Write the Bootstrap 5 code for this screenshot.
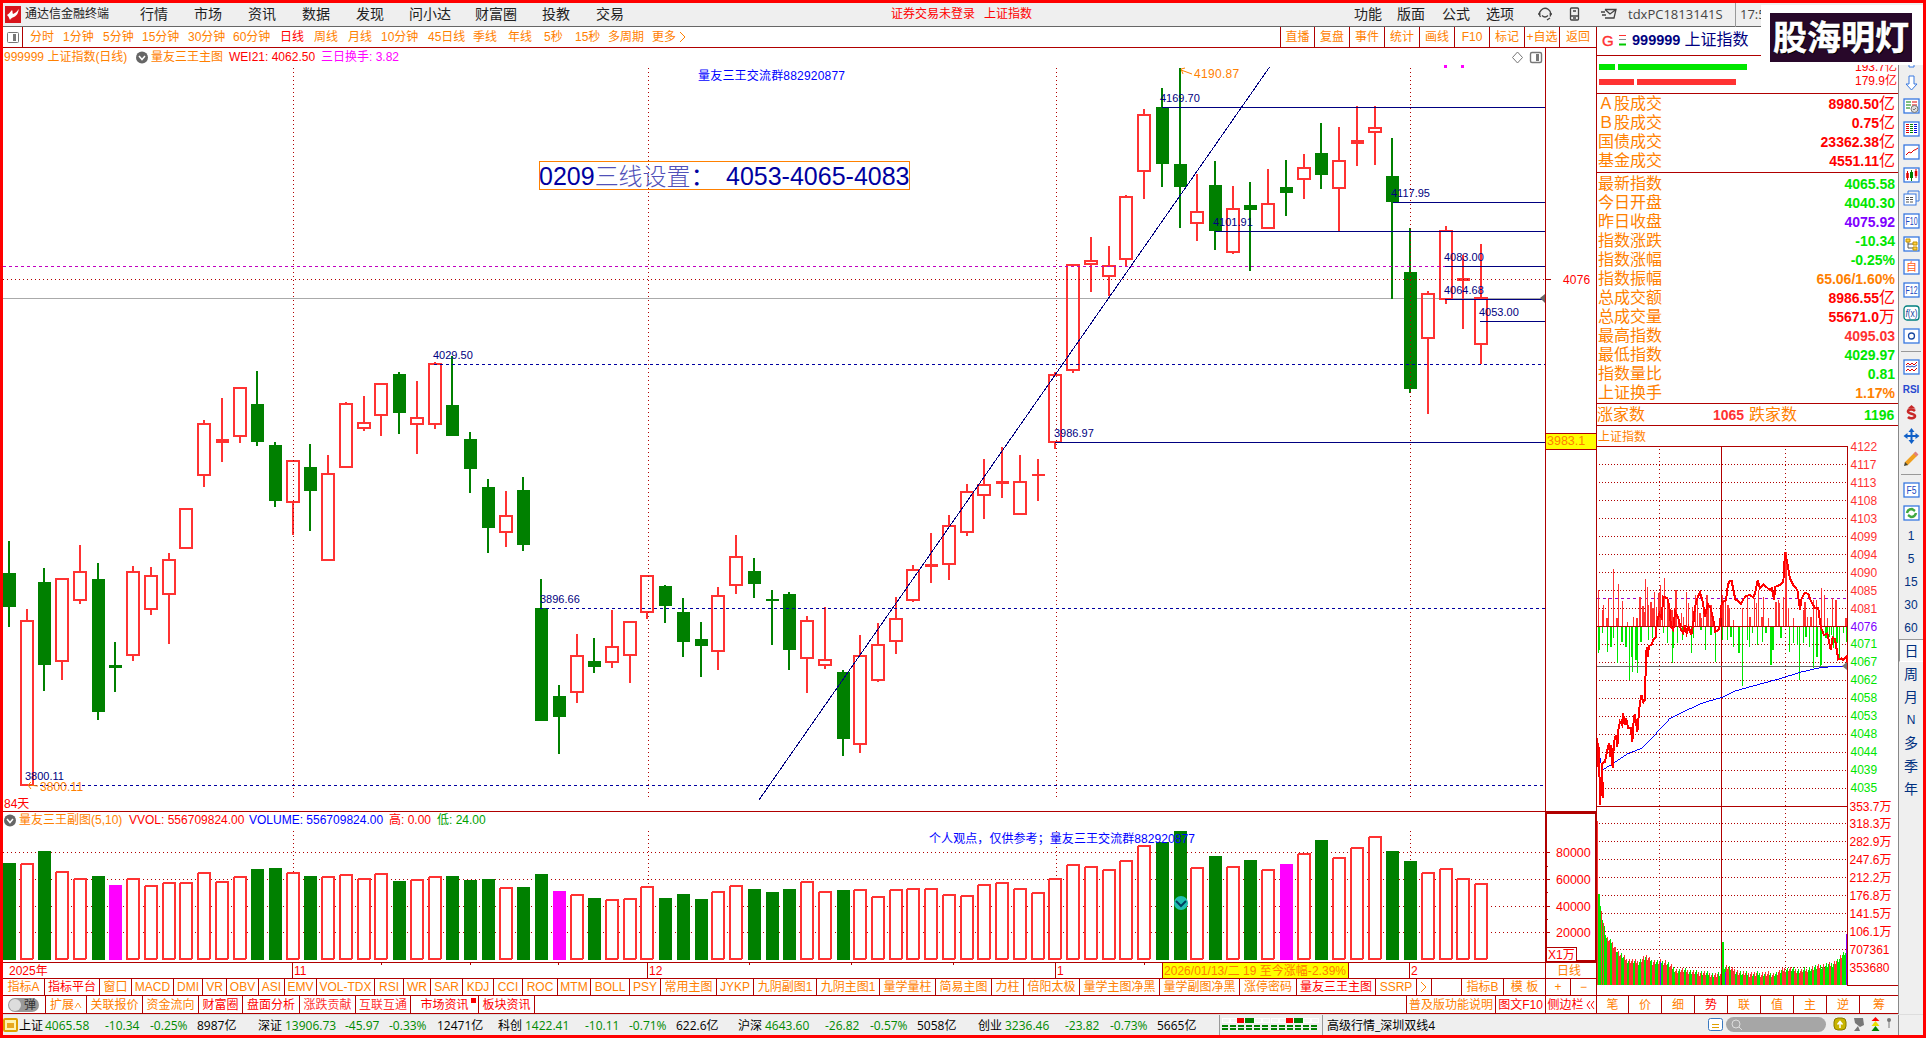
<!DOCTYPE html>
<html lang="zh-CN">
<head>
  <meta charset="UTF-8">
  <title>通达信金融终端</title>
  <link href="https://cdn.jsdelivr.net/npm/bootstrap@5.3.0/dist/css/bootstrap.min.css" rel="stylesheet">
  <style>
    :root { --rule: #b00000; --org: #ff8000; --up: #ff3232; --dn: #00e600; }
    body {
      width: 1926px; height: 1038px; overflow: hidden; background: #fff;
      font: 12px/1 "Liberation Sans", "Noto Sans CJK SC", sans-serif;
      color: var(--org);
    }
    .frame { width: 1926px; height: 1038px; border: 3px solid #f00; }
    svg { display: block; }
    .t-red { color: #f00; }
    .t-up { color: var(--up); }
    .t-dn { color: var(--dn); }
    .t-blue { color: #00f; }
    .t-mag { color: #f0f; }
    .t-pur { color: #8000ff; }
    .t-low { color: #00a000; }
    .t-g { color: #008a00; }
    .t-k { color: #000; }

    .strip { white-space: nowrap; }
    .strip > span { flex: none; display: flex; align-items: center; height: 100%; }
    .cells > span { justify-content: center; border-right: 1px solid var(--rule); }

    .titlebar { height: 24px; background: #efefef; border-bottom: 1px solid #666; color: #222; font-size: 14px; }
    .titlebar .strip > span { padding-bottom: 2px; }
    .titlebar .fs12 { font-size: 12px; }
    .titlebar .ui { font-family: "Open Sans", "Noto Sans CJK SC", sans-serif; font-size: 13px; color: #444; padding-bottom: 0 !important; }
    .midarea { height: 987px; }
    .leftcol { width: 1594px; border-right: 1px solid var(--rule); }
    .periods { height: 21px; border-bottom: 1px solid var(--rule); }
    .pin { width: 20px; border-right: 1px solid var(--rule); justify-content: center; }
    .chartbox { height: 931px; }
    .head1, .head2 { left: 1px; height: 18px; white-space: nowrap; }
    .head1 { top: 0; }
    .head2 { top: 763px; }
    .tabs1 { height: 17px; border-bottom: 1px solid var(--rule); }
    .tabs2 { height: 18px; border-bottom: 1px solid var(--rule); }
    .sidetabs { height: 19px; border-top: 1px solid var(--rule); }

    .quote { width: 302px; border-right: 1px solid #888; }
    .qhead { height: 29px; border-bottom: 1px solid var(--rule); padding: 0 0 2px 5px; }
    .qhead .gee { font-size: 15px; width: 11px; -webkit-text-stroke: .4px; }
    .qhead b { font-size: 14.5px; color: #000080; }
    .qhead .nm { font-size: 16px; color: #000080; }
    .flow { height: 38px; border-bottom: 1px solid var(--rule); }
    .flow .bars { padding: 8px 0 0 2px; gap: 9px; }
    .flow .bars > div { gap: 3px; }
    .flow i { display: block; height: 6px; background: currentColor; }
    .flow span { line-height: 14px; }
    .flow .nums { padding: 4px 1px 0 0; }
    .qrows { border-bottom: 1px solid var(--rule); padding: 0 3px 0 1px; }
    .qrows > div { height: 19px; font-size: 16px; }
    .qrows b { font-size: 14px; }
    .qrows b small { font-size: 16px; font-weight: 400; }
    #rows1 { height: 79px; }
    #rows2 { height: 231px; padding-top: 1px; }
    .counts { height: 22px; font-size: 16px; border-bottom: 1px solid var(--rule); }
    .counts b { font-size: 14px; }

    .tools { width: 24px; background: #efefef; color: #003080; font-size: 12px; padding-top: 21px; }
    .tools > div { height: 23px; }
    .tools > .gap { height: 8px; border-bottom: 1px solid #999; width: 20px; margin-left: 2px; transform: translateY(-3px); }
    .tools .big { font-size: 14px; }
    .tools .on { border: 1px solid #999; border-right: 0; border-bottom-color: #fff; background: #f8f8f8; }
    .tools b { font-size: 10px; color: #2848d0; }

    .status { height: 21px; background: #efefef; font-family: "Open Sans", "Noto Sans CJK SC", sans-serif; color: #000; border-top: 1px solid #ddd; }
    .status .strip > span { padding-top: 2px; }
    .status .line { width: 383px; }
    .toggle { width: 31px; height: 14px; border-radius: 7px; background: #999; color: #333; margin-left: 5px; }
    .toggle i { width: 12px; height: 12px; border-radius: 6px; background: #ddd; margin: 0 3px 0 1px; }
    .seal { right: 0; top: 2px; width: 162px; height: 60px; background: #fff; padding: 8px 11px 3px 9px; z-index: 5; }
    .seal div {
      height: 49px; background: #28082a; color: #fff; font-size: 34px; font-weight: 700; white-space: nowrap;
      -webkit-text-stroke: .5px #fff; text-shadow: 0 0 2px #000, 1px 1px #000;
    }
    .dotsq { width: 5px; height: 5px; background: #f00; right: 2px; top: 2px; }
  </style>
</head>
<body>
<div class="frame d-flex flex-column position-relative">
  <div class="titlebar d-flex align-items-center">
    <svg width="22" height="18" viewBox="0 0 22 18"><rect x="2" y="0" width="16" height="17" fill="#d8141c"/><path d="M4 9c2-1 3-3 5-5 1 1 0 3 1 4 3-1 4-3 6-5-1 3-1 6-5 8-2 1-3 1-4 3-1-2-1-3-3-5z" fill="#fff"/></svg>
    <div class="strip d-flex h-100" id="menu"></div>
  </div>

  <div class="midarea d-flex">
    <div class="leftcol">
      <div class="periods strip d-flex">
        <span class="pin">
          <svg width="12" height="11"><rect x=".5" y=".5" width="11" height="10" rx="1" fill="none" stroke="#777"/><rect x="6" y="2" width="3" height="7" fill="#777"/></svg>
        </span>
        <div class="strip d-flex" id="periods"></div>
        <div class="strip cells d-flex" id="actions"></div>
      </div>

      <div class="chartbox position-relative">
        <div class="head1 position-absolute strip d-flex" id="head1"></div>
        <svg id="chart" width="1593" height="931" viewBox="3 48 1593 931"></svg>
        <div class="head2 position-absolute strip d-flex" id="head2"></div>
      </div>
      <div class="tabs1 strip cells d-flex" id="tabs1"></div>
      <div class="tabs2 strip cells d-flex" id="tabs2"></div>
    </div>

    <div class="quote d-flex flex-column">
      <div class="qhead d-flex align-items-center">
        <span class="gee t-up">G</span>
        <svg width="19" height="12"><path d="M6 1.500h7" stroke="#ff3232"/><path d="M6 5.500h7" stroke="#888"/><path d="M6 10.500h7" stroke="#00c800" stroke-width="2"/></svg>
        <b>999999</b><span class="nm ms-1">上证指数</span>
      </div>
      <div class="flow d-flex justify-content-between">
        <div class="bars d-flex flex-column">
          <div class="d-flex t-dn"><i style="width:16px"></i><i style="width:129px"></i></div>
          <div class="d-flex t-up"><i style="width:35px"></i><i style="width:99px"></i></div>
        </div>
        <div class="nums d-flex flex-column text-end t-red"><span>193.7亿</span><span>179.9亿</span></div>
      </div>
      <div class="qrows" id="rows1"></div>
      <div class="qrows" id="rows2"></div>
      <div class="counts strip d-flex" id="counts"></div>
      <svg id="mini" width="301" height="569" viewBox="1597 426 301 569"></svg>
      <div class="tabs2 sidetabs strip cells d-flex" id="sidetabs"></div>
    </div>

    <div class="tools d-flex flex-column" id="tools"></div>
  </div>

  <div class="status d-flex align-items-center">
    <svg width="16" height="14"><rect x="1" y="1" width="13" height="12" rx="1" fill="#fff3b0" stroke="#e0a000" stroke-width="2"/><rect x="4" y="5" width="7" height="5" fill="#e8a820"/></svg>
    <div class="strip d-flex h-100" id="status"></div>
    <svg width="104" height="20" viewBox="1219 1016 104 20" id="leds"></svg>
    <div class="line strip ps-1"><span>高级行情_深圳双线4</span></div>
    <svg width="210" height="20" viewBox="1706 1016 210 20">
      <rect x="1708.500" y="1019.500" width="14" height="12" rx="2" fill="#fff" stroke="#3878c0"/><path d="M1712 1025.500h7M1712 1028.500h7" stroke="#e0a000"/>
      <rect x="1726" y="1018" width="100" height="15" rx="7.500" fill="#a6a6a6"/>
      <circle cx="1736" cy="1025" r="4" fill="none" stroke="#ddd"/><path d="M1739 1028l3 3" stroke="#ddd"/>
      <rect x="1834" y="1019" width="12" height="12" rx="4" fill="#c8b400" stroke="#887a00"/><path d="M1840 1029v-6m-2.500 2.500l2.500-3 2.500 3" stroke="#fff" stroke-width="1.500" fill="none"/>
      <path d="M1854 1019h9l1 7-4 2-5-4zM1858 1027l-4 5h6z" fill="#777"/>
      <path d="M1875.500 1018l4 4h-8z" fill="#f00"/><path d="M1875.500 1022l4 5h-8z" fill="#e8e000"/><path d="M1875.500 1027l4 5h-8z" fill="#008000"/>
      <circle cx="1889" cy="1021" r="2" fill="#777"/><path d="M1889 1021v8" stroke="#777"/>
      <path d="M1898.500 1016v20" stroke="#888"/>
    </svg>
  </div>

  <div class="seal position-absolute"><div class="d-flex align-items-center justify-content-center">股海明灯</div></div>
</div>

<script src="https://cdn.jsdelivr.net/npm/bootstrap@5.3.0/dist/js/bootstrap.bundle.min.js"></script>
<script>
  const $ = id => document.getElementById(id);

  // [start, text, class]; the width of an item runs to the start of the next one
  function strip(id, items, end) {
    $(id).innerHTML = items.map((it, i) => {
      const w = (i + 1 < items.length ? items[i + 1][0] : end) - it[0];
      return `<span class="${it[2] || ''}" style="width:${w}px">${it[1]}</span>`;
    }).join('');
  }
  // [text, right edge, class]
  function cells(id, x, items) {
    $(id).innerHTML = items.map(([t, r, c]) => {
      const w = r - x; x = r;
      return `<span class="${c || ''}" style="width:${w}px">${t}</span>`;
    }).join('');
  }

  strip('menu', [
    [25, '通达信金融终端', 'fs12'], [140, '行情'], [194, '市场'], [248, '资讯'], [302, '数据'], [356, '发现'], [409, '问小达'],
    [475, '财富圈'], [542, '投教'], [596, '交易'], [891, '证券交易未登录', 'fs12 t-red'], [984, '上证指数', 'fs12 t-red'],
    [1354, '功能'], [1397, '版面'], [1442, '公式'], [1486, '选项'],
    [1537, '<svg width="16" height="16" fill="none" stroke="#444" stroke-width="1.300"><path d="M3.500 11A5.500 5.500 0 1 1 13 10.500M1 8h2.500M12.500 8H15M5 9.500q3 3 6 0M10 14l3-2"/></svg>'],
    [1569, '<svg width="12" height="14" fill="none" stroke="#444" stroke-width="1.300"><rect x="1.500" y="1" width="8" height="12" rx="1"/><path d="M2 9h7M4 4h3M4 11h3"/></svg>'],
    [1600, '<svg width="18" height="14" fill="none" stroke="#444" stroke-width="1.300"><path d="M5 2.500h11l-2 8.500H5M5 2.500l5 4.500 6-4.500M1 5h4M2 8h4"/></svg>'],
    [1628, 'tdxPC1813141S', 'ui'], [1735, '<svg width="5" height="24"><path d="M.5 0v24" stroke="#999"/></svg>17:58', 'ui']
  ], 1900);

  strip('periods', [
    [23, ''], [30, '分时'], [63, '1分钟'], [103, '5分钟'], [142, '15分钟'], [188, '30分钟'], [233, '60分钟'], [280, '日线', 't-red'], [314, '周线'],
    [348, '月线'], [381, '10分钟'], [428, '45日线'], [473, '季线'], [508, '年线'], [544, '5秒'], [575, '15秒'], [608, '多周期'], [652, '更多'],
    [679, '<svg width="9" height="12"><path d="M1 1l5 5-5 5" fill="none" stroke="#ff8000"/></svg>']
  ], 1280);
  cells('actions', 1280, [['', 1281], ['直播', 1315], ['复盘', 1350], ['事件', 1385], ['统计', 1420], ['画线', 1455],
    ['F10', 1490], ['标记', 1525], ['+自选', 1560], ['返回', 1596, 'border-0']]);

  const eye = '<svg width="13" height="13"><circle cx="6" cy="6.500" r="6" fill="#666"/><path d="M3 5l3 3.500L9 5" fill="none" stroke="#fff" stroke-width="1.500"/></svg>';
  strip('head1', [[4, '999999 上证指数(日线)'], [136, eye], [151, '量友三王主图'], [229, 'WEI21: 4062.50', 't-red'], [321, '三日换手: 3.82', 't-mag']], 420);
  strip('head2', [[4, eye], [19, '量友三王副图(5,10)'], [129, 'VVOL: 556709824.00', 't-red'], [249, 'VOLUME: 556709824.00', 't-blue'],
    [389, '高: 0.00', 't-red'], [437, '低: 24.00', 't-low']], 520);

  cells('tabs1', 3, [['指标A', 45], ['指标平台', 100, 't-red'], ['窗口', 132], ['MACD', 174], ['DMI', 203], ['VR', 227], ['OBV', 259], ['ASI', 285],
    ['EMV', 317], ['VOL-TDX', 375], ['RSI', 404], ['WR', 431], ['SAR', 463], ['KDJ', 494], ['CCI', 523], ['ROC', 558], ['MTM', 591], ['BOLL', 630],
    ['PSY', 661], ['常用主图', 717], ['JYKP', 754], ['九阴副图1', 817], ['九阴主图1', 880], ['量学量柱', 936], ['简易主图', 992], ['力柱', 1024],
    ['倍阳太极', 1080], ['量学主图净黑', 1160], ['量学副图净黑', 1240], ['涨停密码', 1297], ['量友三王主图', 1376, 't-red'], ['SSRP', 1417],
    ['<svg width="8" height="12"><path d="M1 1l5 5-5 5" fill="none" stroke="#ff8000"/></svg>', 1432], ['', 1462], ['指标B', 1504], ['模 板', 1546], ['+', 1571], ['−', 1596, 'border-0']]);
  cells('tabs2', 3, [['<div class="toggle d-flex align-items-center"><i></i>弹</div>', 46, 'justify-content-start'],
    ['扩展<svg width="8" height="8"><path d="M1 7l3-5 3 5" fill="none" stroke="#ff8000" stroke-width=".8"/></svg>', 87], ['关联报价', 143],
    ['资金流向', 199], ['财富圈', 243, 't-red'], ['盘面分析', 300, 't-red'], ['涨跌贡献', 356, 't-up'], ['互联互通', 411, 't-up'],
    ['市场资讯<i class="dotsq position-absolute"></i>', 479, 't-red position-relative'], ['板块资讯', 535, 't-red'], ['', 1407], ['普及版功能说明', 1496],
    ['图文F10', 1546, 't-red'], ['侧边栏<svg width="11" height="10"><path d="M6 1L3 5l3 4M10 1L7 5l3 4" fill="none" stroke="#f00"/></svg>', 1596, 't-red border-0']]);
  cells('sidetabs', 1597, [['笔', 1629], ['价', 1662], ['细', 1695], ['势', 1728, 't-red'], ['联', 1761], ['值', 1794], ['主', 1827], ['逆', 1860], ['筹', 1898, 'border-0']]);
  strip('counts', [[1598, '涨家数'], [1714, '<b class="t-up">1065</b>'], [1750, '跌家数'], [1865, '<b class="t-dn">1196</b>']], 1898);

  const rows = (id, list) => $(id).innerHTML = list.map(([k, v, c, u]) =>
    `<div class="d-flex justify-content-between align-items-center"><span>${k}</span><b class="${c}">${v}<small>${u || ''}</small></b></div>`).join('');
  rows('rows1', [['Ａ股成交', '8980.50', 't-red', '亿'], ['Ｂ股成交', '0.75', 't-red', '亿'], ['国债成交', '23362.38', 't-red', '亿'], ['基金成交', '4551.11', 't-red', '亿']]);
  rows('rows2', [['最新指数', '4065.58', 't-dn'], ['今日开盘', '4040.30', 't-dn'], ['昨日收盘', '4075.92', 't-pur'], ['指数涨跌', '-10.34', 't-dn'],
    ['指数涨幅', '-0.25%', 't-dn'], ['指数振幅', '65.06/1.60%', ''], ['总成交额', '8986.55', 't-red', '亿'], ['总成交量', '55671.0', 't-red', '万'],
    ['最高指数', '4095.03', 't-up'], ['最低指数', '4029.97', 't-dn'], ['指数量比', '0.81', 't-dn'], ['上证换手', '1.17%', '']]);

  strip('status', [
    [19, '上证'], [45, '4065.58', 't-g'], [105, '-10.34', 't-g'], [150, '-0.25%', 't-g'], [197, '8987亿'],
    [258, '深证'], [285, '13906.73', 't-g'], [345, '-45.97', 't-g'], [389, '-0.33%', 't-g'], [437, '12471亿'],
    [498, '科创'], [525, '1422.41', 't-g'], [585, '-10.11', 't-g'], [629, '-0.71%', 't-g'], [676, '622.6亿'],
    [738, '沪深'], [765, '4643.60', 't-g'], [825, '-26.82', 't-g'], [870, '-0.57%', 't-g'], [917, '5058亿'],
    [978, '创业'], [1005, '3236.46', 't-g'], [1065, '-23.82', 't-g'], [1110, '-0.73%', 't-g'], [1157, '5665亿']
  ], 1219);

  // daily candles: colour, high, body top, body bottom, low, volume top (volume colour when it differs)
  const days = `g 541 573 607 627 863|r 609 620 786 786 863|g 568 582 665 691 851|r 578 578 662 680 871|r 545 571 601 604 878|g 563 579 712 720 876|g 642 665 668 692 885 m|r 566 571 656 661 878|r 567 575 610 615 885|r 553 559 595 644 882|r 508 508 549 549 882|r 420 423 476 487 872|r 398 439 443 462 881|r 387 387 437 443 876|g 371 404 442 446 869|g 442 445 501 507 868|r 460 460 503 535 872|g 444 467 491 531 876|r 455 473 561 561 876|r 402 403 468 468 874|r 396 422 429 431 878|r 383 383 416 436 873|g 372 374 413 434 881|r 381 417 425 454 879|r 362 363 425 429 876|g 356 405 436 436 876|g 432 439 469 493 880|g 479 487 528 553 879|r 491 515 533 547 887|g 477 490 545 551 887|g 579 608 721 721 874|g 685 696 717 754 891 m|r 634 655 693 703 894|g 638 661 667 673 898|r 610 646 663 668 899|r 621 621 656 683 898|r 575 575 613 619 886|g 585 586 606 623 898|g 598 612 642 657 894|g 622 639 646 677 899|r 587 595 652 670 891|r 535 556 586 594 885|g 558 571 584 598 889|g 590 599 601 645 892|g 592 594 650 670 889|r 616 620 659 693 881|r 607 659 666 669 891|g 670 672 739 756 890|r 635 655 745 753 889|r 623 644 681 682 896|r 597 618 642 654 889|r 565 569 601 602 888|r 533 564 567 583 888|r 515 525 565 580 894|r 484 491 533 536 895|r 459 484 496 519 884|r 447 481 484 498 882|r 455 481 515 515 888|r 459 474 476 501 892|r 372 374 443 449 878|r 264 264 371 373 864|r 237 260 265 292 866|r 246 265 277 296 869|r 195 196 260 266 860|r 109 114 172 199 845|g 88 107 164 187 842|g 68 164 187 228 831|r 174 211 224 241 867|g 161 185 231 250 856|r 186 208 253 254 866|g 182 205 210 271 860|r 169 203 229 229 869|g 160 187 193 216 864 m|r 154 167 180 199 853|g 123 153 175 189 840|r 127 160 189 231 857|r 106 140 144 166 847|r 106 127 133 165 836|g 138 176 202 299 851|g 228 272 389 393 861|r 291 293 339 414 872|r 226 230 300 304 868|r 255 278 281 329 878|r 244 297 345 364 883`
    .split('|').map(s => s.split(' '));
  const col = { r: '#ff3232', g: '#008000', m: '#f0f' };
  const h = (x1, x2, y, c, dash) => `<path d="M${x1} ${y + .5}H${x2}" stroke="${c}" ${dash ? `stroke-dasharray="${dash}"` : ''}/>`;
  const v = (x, y1, y2, c, dash) => `<path d="M${x + .5} ${y1}V${y2}" stroke="${c}" ${dash ? `stroke-dasharray="${dash}"` : ''}/>`;
  const box = (x, y, w, hh, c) => `<rect x="${x}" y="${y}" width="${w}" height="${hh}" fill="${c}"/>`;
  const txt = (x, y, s, c, size, extra) => `<text x="${x}" y="${y}" fill="${c}" font-size="${size || 12}" ${extra || ''}>${s}</text>`;
  const R = '#b00000', N = '#000080', DOT = '1 3', DASH = '3 3';

  let s = '<g fill="none" shape-rendering="crispEdges">';
  [852, 879, 906, 932].forEach(y => s += h(3, 1545, y, R, DOT) + h(1545, 1550, y, R));
  [866, 892, 919].forEach(y => s += h(1545, 1548, y, R));
  [293, 648, 1056, 1410].forEach(x => s += v(x, 831, 960, R, DOT));
  s += h(3, 1545, 298, '#aaa');
  days.forEach((d, i) => {
    const x = Math.round(9 + 17.735 * i), c = col[d[0]], [hi, a, b, lo, vol] = d.slice(1).map(Number);
    s += box(x - 1, hi, 2, a - hi, c) + box(x - 1, b, 2, lo - b, c);
    if (d[0] === 'g' || b - a < 5) s += box(x - 6, a, 13, b - a, c);
    else s += `<rect x="${x - 6}" y="${a + 1}" width="12" height="${b - a - 2}" stroke="${c}" stroke-width="2"/>`;
    const k = d[6] || d[0];
    if (k === 'r') s += `<rect x="${x - 6}" y="${vol + 1}" width="12" height="${960 - vol - 2}" rx="1" fill="#fff" stroke="${c}" stroke-width="2"/>`;
    else s += box(x - 6, vol, 13, 960 - vol, col[k]);
  });
  [293, 648, 1056, 1410].forEach(x => s += v(x, 68, 798, R, DOT) + v(x - 1, 963, 978, R));
  s += h(434, 1545, 364, '#0000a0', DASH) + h(540, 1545, 608, '#0000a0', DASH) + h(28, 1545, 785, '#0000a0', DASH);
  s += h(3, 1446, 266, '#c000c0', DASH) + h(3, 1545, 279, R, DOT) + h(1545, 1551, 279, R);
  [[1162, 107], [1393, 202], [1215, 231], [1445, 266], [1445, 299], [1480, 321], [1055, 442]].forEach(([x, y]) => s += h(x, 1545, y, N));
  s += `<path d="M759 800L1269.600 67" stroke="${N}"/>`;
  s += h(3, 1596, 811, R) + v(1545, 48, 978, R) + h(3, 1596, 962, R) + h(3, 1596, 978, R);
  s += `<rect x="1546" y="813" width="50" height="148" stroke="${R}" stroke-width="2"/>`;
  s += `<rect x="1546.500" y="947.500" width="30" height="14" fill="#fff" stroke="${R}"/>`;
  [381, 470, 558, 749, 851, 953, 1144].forEach(x => s += v(x, 963, 965, R));
  s += box(1163, 963, 185, 15, '#ff0') + v(1162, 963, 978, R) + v(1348, 963, 978, R);
  s += box(1546, 433, 50, 16, '#ff0') + h(1546, 1596, 433, R) + h(1546, 1596, 449, R);
  s += box(1444, 65, 3, 3, '#f0f') + box(1461, 65, 3, 3, '#f0f');
  s += `<rect x="539.500" y="161.500" width="370" height="28" stroke="#ff8000"/></g>`;
  s += '<path d="M1517.500 52l5 5.500-5 5.500-5-5.500z" fill="none" stroke="#777"/><rect x="1530.500" y="52.500" width="11" height="10" rx="1.500" fill="none" stroke="#777" stroke-width="1.400"/><path d="M1536 54h3v7h-3z" fill="#777"/>';
  s += '<path d="M1545 294l-5 4 5 5z" fill="#666"/><path d="M1192 74l-11-4M1185 68l-4 1 2 5M38 786l-10-1M31 782l-3 3 3 4" fill="none" stroke="#ff8000"/>';
  [[1160, 102, '4169.70'], [1391, 197, '4117.95'], [1213, 226, '4101.91'], [1444, 261, '4083.00'], [1444, 294, '4064.68'], [1479, 316, '4053.00'],
    [1054, 437, '3986.97'], [433, 359, '4029.50'], [540, 603, '3896.66'], [25, 780, '3800.11']].forEach(([x, y, t]) => s += txt(x, y, t, N, 11));
  s += txt(1194, 78, '4190.87', '#ff8000', 12, 'letter-spacing=".3"') + txt(40, 791, '3800.11', '#ff8000', 12, 'letter-spacing=".1"');
  s += txt(698, 80, '量友三王交流群882920877', '#00f', 12, 'textLength="147"');
  s += `<text x="539" y="185" fill="#0000a0" font-size="25" xml:space="preserve">0209<tspan fill="#5050b8" font-family="Noto Sans CJK SC" font-weight="300" font-size="24">三线设置</tspan><tspan font-family="Noto Sans CJK SC" font-size="24">：</tspan><tspan x="726">4053-4065-4083</tspan></text>`;
  s += txt(929, 843, '个人观点，仅供参考；量友三王交流群882920877', '#00f', 12, 'textLength="266"');
  s += txt(4, 808, '84天', '#f00') + txt(9, 975, '2025年', '#f00') + txt(294, 975, '11', '#f00') + txt(649, 975, '12', '#f00') + txt(1057, 975, '1', '#f00') + txt(1411, 975, '2', '#f00');
  s += txt(1164, 975, '2026/01/13/二 19 至今涨幅-2.39%', '#ff8000', 12, 'textLength="182"') + txt(1557, 975, '日线', '#ff8000');
  s += txt(1563, 284, '4076', '#f00', 12, 'letter-spacing=".2"') + txt(1547, 445, '3983.1', '#ff8000', 12.5) + txt(1548, 959, 'X1万', '#f00');
  [[80000, 857], [60000, 884], [40000, 911], [20000, 937]].forEach(([t, y]) => s += txt(1556, y, t, '#f00', 12.5));
  s += '<circle cx="1181" cy="903" r="7" fill="#20c0b0"/><path d="M1176 901l5 5 5-5" fill="none" stroke="#004060" stroke-width="2"/>';
  $('chart').innerHTML = s;

  // intraday panel
  let m = '<g fill="none" shape-rendering="crispEdges">';
  for (let i = 1; i < 20; i++) if (i !== 10) m += h(1599, 1847, 446 + i * 18, R, '1 2');
  for (let i = 0; i < 9; i++) m += h(1599, 1847, 823 + i * 18, R, '1 2');
  [1659, 1785].forEach(x => m += v(x, 449, 985, R, DOT));
  m += h(1597, 1847, 598, '#a000c0', DASH);
  const bars = (list, base, c) => list.split(' ').forEach(p => {
    const [x, y] = p.split(':').map(Number), yy = 400 + y / 3;
    m += box(Math.round(1580 + x / 3), Math.min(base, yy), x % 3 ? 1 : 2, Math.abs(base - yy), c);
  });
  bars('55:570 65:630 70:615 78:655 85:595 100:507 108:655 115:552 127:603 140:665 160:650 168:655 176:590 181:590 186:618 191:635 196:537 200:560 205:615 210:605 216:625 223:575 229:620 233:580 237:575 241:555 245:595 253:535 261:600 268:640 273:630 285:570 293:650 302:640 310:650 319:575 325:610 335:620 346:585 352:600 357:640 362:655 370:620 378:585 383:610 390:615 396:660 425:585 430:600 436:600 441:615 448:625 458:660 487:625 500:590 507:650 521:595 529:610 535:570 543:650 550:590 563:655 585:605 593:600 598:610 610:590 615:457 623:625 640:655 668:630 672:605 680:650 690:650 698:600 709:600 722:565 733:585 740:655 757:595 765:600 795:655 800:655', 626, '#ff3232');
  bars('53:760 58:750 65:700 80:755 90:740 98:715 112:790 123:725 135:740 148:840 152:770 157:815 165:780 172:820 180:725 205:720 215:715 250:700 260:730 275:790 280:745 292:730 305:720 320:700 334:760 338:715 360:690 374:750 390:705 406:785 425:720 440:720 450:710 458:740 474:760 485:857 500:720 506:740 515:700 530:735 545:725 555:700 570:795 575:750 580:750 600:715 628:755 640:730 650:735 658:840 668:730 675:710 688:740 698:805 708:770 719:803 724:795 735:715 742:700 746:710 752:705 760:745 768:730 778:775 790:700 798:725', 627, '#00e600');
  const env = [[1597, 893], [1599, 897], [1601, 912], [1604, 928], [1606, 938], [1612, 943], [1618, 953], [1626, 960], [1638, 962], [1645, 957], [1652, 962], [1665, 962], [1675, 970], [1692, 972], [1720, 975],
    [1724, 966], [1733, 970], [1742, 974], [1775, 974], [1785, 969], [1800, 971], [1812, 968], [1824, 966], [1832, 964], [1838, 960], [1843, 955], [1847, 953]];
  for (let x = 1597, k = 0; x < 1846; x++) {
    while (env[k + 1][0] < x) k++;
    const [a, ya] = env[k], [b, yb] = env[k + 1], n = (x * 7919 % 97) / 97;
    const y = ya + (yb - ya) * (x - a) / (b - a) + n * 6 - 3;
    m += box(x, y, 1, 985 - y, x < 1603 && n > .4 || (x * 31 % 17) > (x > 1810 ? 6 : 9) ? '#00e600' : '#ff3232');
  }
  m += box(1597, 821, 1, 164, '#ff3232') + box(1722, 942, 2, 43, '#00e600') + box(1660, 962, 1, 23, '#8000ff') + box(1725, 972, 1, 13, '#8000ff') + box(1846, 934, 2, 51, '#8000ff');
  m += h(1597, 1847, 626, R) + h(1597, 1847, 446, R) + h(1597, 1847, 806, R) + h(1847, 1898, 985, R) + v(1721, 446, 985, R) + v(1847, 446, 985, R) + h(1597, 1847, 666, '#666');
  m += `<g transform="translate(1580 400) scale(.33333)"><path stroke="#00f" stroke-width="3" d="M52 1035L62 1085 68 1110 95 1093 140 1063 185 1045 200 1030 240 988 270 955 300 940 370 908 424 893 465 873 530 855 600 836 660 817 720 803 780 798 800 799"/>
    <path stroke="#f00" stroke-width="6" d="M52 1015L55 1100 57 1040 60 1215 65 1130 68 1195 67 1090 75 1085 82 1050 87 1030 90 1070 94 1035 98 1105 102 1025 108 1005 112 1040 115 990 120 965 126 975 129 938 134 975 138 955 145 985 152 985 157 1025 160 975 164 942 168 965 172 995 178 925 184 885 190 907 195 900 198 760 201 740 203 770 207 738 214 735 220 720 228 710 230 670 238 640 245 655 250 590 262 595 268 620 273 680 280 690 285 635 295 655 303 690 310 700 314 675 320 700 326 680 334 705 340 670 345 620 352 595 360 577 368 605 375 650 383 612 392 625 400 660 406 695 415 690 420 675 425 610 438 600 443 560 447 545 455 543 460 570 466 598 475 603 483 612 490 598 498 588 510 585 520 592 525 580 533 540 540 565 550 553 560 562 570 570 576 565 582 600 586 560 600 555 610 545 615 457 622 490 630 535 640 555 652 570 660 630 665 595 675 578 685 582 692 602 705 625 715 625 722 680 732 705 742 700 752 750 758 712 765 718 775 778 785 775 790 780 800 770 802 790"/></g>`;
  m += '</g><path d="M1847 662l-5 4 5 4z" fill="#777"/>' + txt(1598, 441, '上证指数', '#ff8000');
  [4122, 4117, 4113, 4108, 4103, 4099, 4094, 4090, 4085, 4081, 4076, 4071, 4067, 4062, 4058, 4053, 4048, 4044, 4039, 4035].forEach((p, i) =>
    m += txt(1850.5, 451 + i * 17.95, p, i < 10 ? '#ff3232' : i === 10 ? '#8000ff' : '#00e600'));
  ['353.7万', '318.3万', '282.9万', '247.6万', '212.2万', '176.8万', '141.5万', '106.1万', '707361', '353680'].forEach((p, i) =>
    m += txt(1849.5, 810.5 + i * 17.9, p, '#f00', 12));
  $('mini').innerHTML = m;

  const ic = (body, stroke) => `<svg width="17" height="16" viewBox="0 0 17 16" fill="none"><rect x="1" y="1" width="15" height="14" fill="#fff" stroke="${stroke || '#3878e0'}" stroke-width="1.300" ${stroke ? 'rx="3"' : ''}/>${body}</svg>`;
  const raw = body => `<svg width="17" height="16" viewBox="0 0 17 16" fill="none">${body}</svg>`;
  const lbl = (t, c, x, w) => `<text x="8.500" y="12" text-anchor="middle" font-size="${x || 11}" fill="${c || '#1848c0'}" ${w ? `textLength="${w}" lengthAdjust="spacingAndGlyphs"` : ''}>${t}</text>`;
  const arrow = '<path d="M6 1h5v8h3l-5.500 6L3 9h3z" stroke="#3878e0" fill="#fff"/>';
  const tools = [
    raw(`<g transform="rotate(180 8.500 8)">${arrow}</g>`), raw(arrow),
    ic('<path d="M3 4h5M3 7h5M3 10h4" stroke="#008000"/><path d="M9 4h5M9 7h5" stroke="#e00000"/><circle cx="11.500" cy="11" r="3.500" fill="#ddd" stroke="#777"/><path d="M10 11l1 1 2-2" stroke="#777"/>'),
    ic('<path d="M4.500 3v10" stroke="#e00000" stroke-width="3" stroke-dasharray="1 1"/><path d="M8.500 3v10" stroke="#008000" stroke-width="3" stroke-dasharray="1 1"/><path d="M12.500 3v10" stroke="#0000e0" stroke-width="3" stroke-dasharray="1 1"/>'),
    ic('<path d="M3 11l3-3 2 1 3-3h1l3-2" stroke="#e00000"/>'),
    ic('<path d="M4.500 6v5M13 4v5" stroke="#e00000" stroke-width="2.500"/><path d="M8.500 5v6" stroke="#008000" stroke-width="3"/><path d="M4.500 4v9M13 2v9" stroke="#e00000"/><path d="M8.500 3v11" stroke="#008000"/>'),
    raw('<path d="M5 4V1h11v10h-3" stroke="#3878e0"/><rect x="1" y="4" width="12" height="11" fill="#fff" stroke="#3878e0"/><path d="M3 7.500h8M3 9.500h8M3 12h8" stroke="#555" stroke-dasharray="3 1"/>'),
    ic(lbl('F10', '', 10, 12)),
    ic('<path d="M5 6v6h5M5 8h5" stroke="#555"/><path d="M3 3h4v3H3zM10 6h4v3h-4zM10 11h4v3h-4z" fill="#ffd040" stroke="#c09000"/>'),
    ic(lbl('自', '#ff6020', 11)), ic(lbl('F12', '', 10, 12)), ic(lbl('<tspan font-style="italic">f</tspan>(x)', '#1848a0', 10.5, 12), '#008080'),
    ic('<circle cx="8.500" cy="8" r="3" stroke="#1848a0" stroke-width="1.300"/>'), 'gap',
    ic('<path d="M3 6l2-2 2 2 2-2 2 2 3-3M3 12l2-2 2 2 2-2 2 2 3-3" stroke="#e00000"/><path d="M3 8l2-1 2 1 2-1 2 1 3-2" stroke="#2040c0"/>'),
    '<b>RSI</b>',
    raw('<path d="M12 6C10 4 5 4 5 6.500s7 2 7 4.500-5 3-7 1" stroke="#c82828" stroke-width="2.600"/><path d="M8.500 0l4 3.500h-8z" fill="#c82828"/>'),
    raw('<path d="M8.500 0l3 4h-2v3h3V5l4 3-4 3V9h-3v3h2l-3 4-3-4h2V9h-3v2l-4-3 4-3v2h3V4h-2z" fill="#1060c8"/>'),
    raw('<path d="M3 13L13 3" stroke="#f0a020" stroke-width="4"/><path d="M12 4l2-2" stroke="#e08080" stroke-width="4"/><path d="M1 15l1-4 3 3z" fill="#443"/>'), 'gap',
    ic(lbl('F5', '', 11, 10)),
    ic('<path d="M4 8q1-4 5-4l3 2M13 8q-1 4-5 4l-3-2" stroke="#40a840" stroke-width="2.500"/>'),
    '1', '5', '15', '30', '60', '日', '周', '月', 'N', '多', '季', '年'
  ];
  $('tools').innerHTML = tools.map(t => t === 'gap' ? '<div class="gap"></div>' :
    `<div class="d-flex align-items-center justify-content-center ${/^[^\x00-\x7f]/.test(t) ? 'big' : ''} ${t === '日' ? 'on' : ''}">${t}</div>`).join('');

  let l = '<path d="M1219.500 1016v20M1322.500 1016v20" stroke="#999"/>';
  [1222, 1271].forEach(x => {
    for (let i = 0; i < 6; i++) {
      l += `<rect x="${x + i * 8 + .5}" y="1019.500" width="7" height="4" fill="#f4f4f4" stroke="#fff"/>`;
      l += box(x + i * 8, 1026, 6, 2, '#008000') + box(x + i * 8, 1029, 6, 2, '#008000');
    }
    l += box(x + 15, 1019, 7, 5, '#e00') + box(x + 23, 1019, 9, 5, '#008000');
  });
  $('leds').innerHTML = l;
</script>
</body>
</html>
